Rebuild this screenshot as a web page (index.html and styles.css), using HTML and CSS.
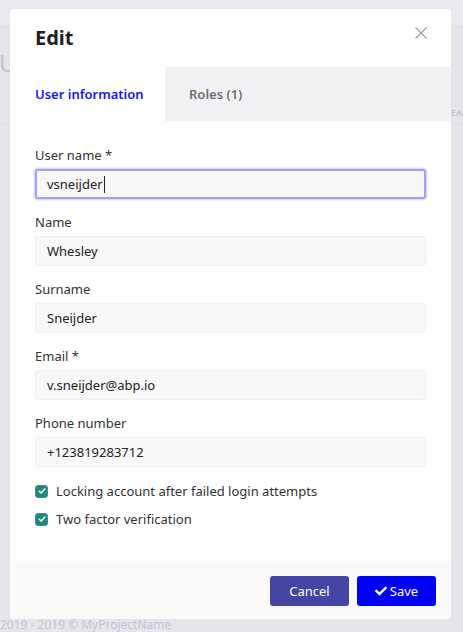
FILE: index.html
```html
<!DOCTYPE html>
<html lang="en">
<head>
<meta charset="utf-8">
<title>Edit user</title>
<link rel="stylesheet" href="styles.css">
</head>
<body>
<div class="page">
  <div class="topbar"></div>
  <div class="page-title">Users</div>
  <div class="toolbar"><span class="toolbar-text">SEAR</span></div>
  <div class="page-card"></div>
  <div class="page-footer">2019 - 2019 © MyProjectName</div>
</div>

<div class="overlay">
  <div class="modal">
    <div class="modal-header">
      <h1 class="modal-title">Edit</h1>
      <button class="close" aria-label="Close">
        <svg width="12" height="12" viewBox="0 0 12 12"><path d="M0.5 0.5L11.5 11.5M11.5 0.5L0.5 11.5" stroke="#9a9aa2" stroke-width="1.1" fill="none"/></svg>
      </button>
    </div>
    <div class="tabs">
      <div class="tab tab-active">User information</div>
      <div class="tab tab-inactive">Roles (1)</div>
    </div>
    <div class="modal-body">
      <div class="field">
        <label class="label">User name *</label>
        <div class="input input-focus">vsneijder<span class="caret"></span></div>
      </div>
      <div class="field">
        <label class="label">Name</label>
        <div class="input">Whesley</div>
      </div>
      <div class="field">
        <label class="label">Surname</label>
        <div class="input">Sneijder</div>
      </div>
      <div class="field">
        <label class="label">Email *</label>
        <div class="input">v.sneijder@abp.io</div>
      </div>
      <div class="field">
        <label class="label">Phone number</label>
        <div class="input">+123819283712</div>
      </div>
      <div class="checks">
        <div class="check">
          <span class="box"><svg width="8" height="8" viewBox="0 0 8 8"><path d="M1.3 4.2L3.2 6L6.8 2" stroke="#fff" stroke-width="1.5" fill="none" stroke-linecap="round" stroke-linejoin="round"/></svg></span>
          <span class="check-label">Locking account after failed login attempts</span>
        </div>
        <div class="check">
          <span class="box"><svg width="8" height="8" viewBox="0 0 8 8"><path d="M1.3 4.2L3.2 6L6.8 2" stroke="#fff" stroke-width="1.5" fill="none" stroke-linecap="round" stroke-linejoin="round"/></svg></span>
          <span class="check-label">Two factor verification</span>
        </div>
      </div>
    </div>
    <div class="modal-footer">
      <button class="btn btn-cancel">Cancel</button>
      <button class="btn btn-save"><svg width="12" height="12" viewBox="0 0 512 512"><path fill="#fff" d="M173.898 439.404l-166.4-166.4c-9.997-9.997-9.997-26.206 0-36.204l36.203-36.204c9.997-9.998 26.207-9.998 36.204 0L192 312.69 432.095 72.596c9.997-9.997 26.207-9.997 36.204 0l36.203 36.204c9.997 9.997 9.997 26.206 0 36.204l-294.4 294.401c-9.998 9.997-26.207 9.997-36.204-.001z"/></svg>Save</button>
    </div>
  </div>
</div>
</body>
</html>
```

FILE: styles.css
```css
* { box-sizing: border-box; }
html, body { margin: 0; padding: 0; }
body {
  width: 463px;
  height: 632px;
  overflow: hidden;
  background: #e6e5ec;
  font-family: "Noto Sans", "Open Sans", sans-serif;
  color: #333;
  position: relative;
}
.page {
  display: flex;
  flex-direction: column;
  height: 632px;
}
.topbar {
  height: 27px;
  background: #e9e8ee;
  border-bottom: 1px solid #e2e1e8;
}
.page-title {
  font-size: 24px;
  color: #c2c1c8;
  padding-top: 20px;
  line-height: 32px;
  margin-left: -1px;
}
.toolbar {
  padding-left: 446px;
  padding-top: 28px;
  white-space: nowrap;
  overflow: hidden;
  font-size: 9px;
  color: #c4c3ca;
  font-weight: 600;
  line-height: 12px;
}
.page-card {
  flex: 1;
  border-top: 1px solid #e0dfe6;
  margin-top: 4px;
}
.page-footer {
  font-size: 12px;
  color: #c6c5cc;
  line-height: 14px;
  height: 14px;
  margin-bottom: 0;
  white-space: nowrap;
}

.overlay {
  position: absolute;
  left: 0; top: 0;
  width: 463px;
  height: 632px;
  padding: 9px 12px 12px 10px;
  display: flex;
  align-items: flex-start;
}
.modal {
  width: 441px;
  height: 610px;
  background: #fff;
  border-radius: 4px;
  display: flex;
  flex-direction: column;
  overflow: hidden;
}
.modal-header {
  display: flex;
  align-items: center;
  justify-content: space-between;
  height: 58px;
  padding: 0 24px 0 25px;
}
.modal-title {
  margin: 0;
  font-size: 20px;
  font-weight: 700;
  color: #1e1e28;
  line-height: 28px;
  padding-top: 0;
}
.close {
  border: 0;
  background: none;
  padding: 0;
  width: 12px;
  height: 12px;
  display: flex;
  margin-top: -10px;
}
.tabs {
  display: flex;
  height: 54px;
  background: #f2f2f5;
}
.tab {
  display: flex;
  align-items: center;
  font-size: 13px;
  font-weight: 600;
}
.tab-active {
  background: #fff;
  color: #1515f5;
  width: 155px;
  padding-left: 25px;
}
.tab-inactive {
  color: #6e6e78;
  padding-left: 24px;
}
.modal-body {
  flex: 1;
  padding: 26px 25px 0 25px;
  display: flex;
  flex-direction: column;
  gap: 15px;
}
.field {
  display: flex;
  flex-direction: column;
  gap: 6px;
}
.label {
  font-size: 13px;
  line-height: 16px;
  color: #333;
}
.input {
  height: 30px;
  background: #f8f8f8;
  border: 1px solid #f0f0f0;
  border-radius: 3px;
  font-size: 13px;
  color: #222;
  display: flex;
  align-items: center;
  padding-left: 11px;
}
.input-focus {
  border: 2px solid #a3a0fb;
  box-shadow: 0 0 2px 1px rgba(140, 135, 255, 0.45);
  padding-left: 10px;
}
.caret {
  display: inline-block;
  width: 1px;
  height: 17px;
  background: #222;
  margin-left: 1px;
}
.checks {
  display: flex;
  flex-direction: column;
  gap: 12px;
  margin-top: 1px;
}
.check {
  display: flex;
  align-items: center;
  gap: 8px;
  height: 16px;
}
.box {
  width: 13px;
  height: 13px;
  border-radius: 3px;
  background: #1e8a6e;
  border: 1px solid #3f84c4;
  display: flex;
  align-items: center;
  justify-content: center;
}
.check-label {
  font-size: 13px;
  color: #333;
}
.modal-footer {
  height: 58px;
  background: #fafafa;
  display: flex;
  justify-content: flex-end;
  align-items: center;
  gap: 8px;
  padding: 0 15px 0 0;
  padding-top: 2px;
}
.btn {
  height: 30px;
  width: 79px;
  border: 0;
  border-radius: 3px;
  color: #fff;
  font-family: inherit;
  font-size: 13px;
  display: flex;
  align-items: center;
  justify-content: center;
  gap: 3px;
  padding: 0;
}
.btn-cancel { background: #4545a3; }
.btn-save { background: #0000f5; }
```
